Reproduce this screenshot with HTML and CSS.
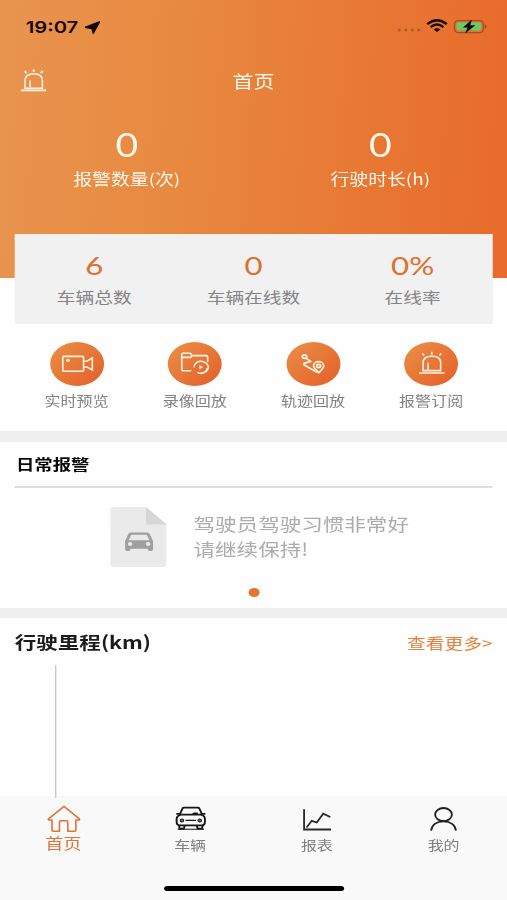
FILE: index.html
```html
<!DOCTYPE html>
<html lang="zh-CN">
<head>
<meta charset="utf-8">
<title>首页</title>
<link rel="stylesheet" href="styles.css">
</head>
<body>
<div class="screen">
  <header class="hero">
    <div class="status">
      <span class="time">19:07</span>
      <svg class="locate" viewBox="0 0 16 13" preserveAspectRatio="none"><path d="M15 .8 8.9 12.2 7.4 7.6 1 6.2z" fill="#100600" stroke="#100600" stroke-width="1.4" stroke-linejoin="round"/></svg>
      <svg class="signals" viewBox="0 0 92 16" preserveAspectRatio="none">
        <g fill="#a8602a"><circle cx="2.5" cy="12" r="1.6"/><circle cx="9" cy="12" r="1.6"/><circle cx="15.5" cy="12" r="1.6"/><circle cx="22" cy="12" r="1.6"/></g>
        <g fill="none" stroke="#140800" stroke-width="2.4"><path d="M30.5 6.1Q40.3-1.8 50.1 6.1"/><path d="M34 9.1Q40.3 4.1 46.6 9.1"/></g>
        <path d="M37 11.4Q40.3 9 43.6 11.4L40.3 14z" fill="#140800"/>
        <rect x="57.8" y="2.6" width="29" height="12" rx="3.8" fill="none" stroke="#9c531f" stroke-width="1.4"/>
        <rect x="60" y="4.6" width="24.5" height="8" rx="2" fill="#66cb68"/>
        <path d="M88.3 6.3q2.8 2.3 0 4.6z" fill="#8d4a1a"/>
        <path d="M74.8 2.2 66.8 9.3H71.2L69 14.8 78 7.6H73.2z" fill="#140800" stroke="#140800" stroke-width=".5"/>
      </svg>
    </div>
    <div class="navbar">
      <svg class="siren" viewBox="0 0 26 23" preserveAspectRatio="none"><g fill="none" stroke="#fff7e9" stroke-width="1.5"><path d="M4.2 19.2V11.5C4.2 7 7.8 4.7 13 4.7S21.8 7 21.8 11.5V19.2zM9.4 18V11.5"/><path d="M.3 21.4H25.7" stroke-width="1.7"/><path d="M13 .2V3M3.8 2.2 5.8 4M22.2 2.2 20.2 4" stroke-width="1.8"/></g></svg>
      <h1 class="title">首页</h1>
    </div>
    <div class="totals">
      <div class="total"><b class="total-num">0</b><span class="total-label">报警数量(次)</span></div>
      <div class="total"><b class="total-num">0</b><span class="total-label">行驶时长(h)</span></div>
    </div>
  </header>

  <section class="stats">
    <div class="stat"><b class="stat-num">6</b><span class="stat-label">车辆总数</span></div>
    <div class="stat"><b class="stat-num">0</b><span class="stat-label">车辆在线数</span></div>
    <div class="stat"><b class="stat-num">0%</b><span class="stat-label">在线率</span></div>
  </section>

  <nav class="shortcuts">
    <a class="shortcut">
      <svg class="disc" viewBox="0 0 54 44" preserveAspectRatio="none"><g fill="none" stroke="#fff3e4" stroke-width="1.6"><rect x="12.6" y="14.4" width="20.8" height="14.8" rx=".8"/><path d="M33.4 19.2H36.8L42.2 16V28L36.8 25H33.4"/></g><ellipse cx="17.8" cy="18.3" rx="1.9" ry="1.6" fill="#fff3e4"/></svg>
      <span>实时预览</span>
    </a>
    <a class="shortcut">
      <svg class="disc" viewBox="0 0 54 44" preserveAspectRatio="none"><g fill="none" stroke="#fff3e4" stroke-width="1.6"><path d="M23.5 28.8H15.6Q14 28.8 14 27.4V12.3Q14 11.3 15.2 11.3H22.6L24.3 13.6H38.6Q40 13.6 40 15V20M14 15.4H23L24.3 13.6"/><path d="M26.2 25.2A7.2 6 0 1 1 29.6 30.4M39.8 26Q38.6 31.2 32.6 31.2"/></g><path d="M31.6 23 35.4 25.3 31.6 27.6z" fill="#fff3e4"/></svg>
      <span>录像回放</span>
    </a>
    <a class="shortcut">
      <svg class="disc" viewBox="0 0 54 44" preserveAspectRatio="none"><g fill="none" stroke="#fff3e4" stroke-width="1.7" stroke-linejoin="round"><ellipse cx="18" cy="14.6" rx="2.2" ry="1.8"/><path d="M19.4 16.2 24.3 19.4 17.4 21.4V22.7L29.5 29.8 32.2 30.5"/><path d="M32.3 30.7C29.4 27.8 27 26 27 23.8A5.1 4.2 0 0 1 37.2 23.8C37.2 26.4 34.7 28.4 32.3 30.7z"/><ellipse cx="32.1" cy="24" rx="2" ry="1.6"/></g></svg>
      <span>轨迹回放</span>
    </a>
    <a class="shortcut">
      <svg class="disc" viewBox="0 0 54 44" preserveAspectRatio="none"><g fill="none" stroke="#fff3e4" stroke-width="1.6"><path d="M19 28.6V20.8C19 16.5 22.4 14.3 27.8 14.3S36.6 16.5 36.6 20.8V28.6zM24 27.4V20.8"/><path d="M15 31H40.6" stroke-width="1.7"/><path d="M27.7 9.8V12.7M18.2 11.5 20.2 13.5M37.3 11.5 35.3 13.5" stroke-width="1.6"/></g></svg>
      <span>报警订阅</span>
    </a>
  </nav>

  <section class="panel alarms">
    <h2 class="alarms-title">日常报警</h2>
    <div class="notice">
      <svg class="file" viewBox="0 0 56 60" preserveAspectRatio="none">
        <path d="M4.5 0H35.5L56 17.5V56.5Q56 60 51.5 60H4.5Q0 60 0 56.5V3.5Q0 0 4.5 0z" fill="#eaeaea"/>
        <path d="M35.5 0 56 17.5H35.5z" fill="#d7d7d7"/>
        <path fill-rule="evenodd" d="M20.3 25.4H36.7Q38.6 25.4 39.4 27.2L42.6 34V42.3Q42.6 44 40.6 44H39.3Q37.2 44 37.2 41.8H20.2Q20.2 44 18.2 44H17Q14.8 44 14.8 42.3V34L17.9 27.2Q18.7 25.4 20.3 25.4zM20.9 27.7 18.4 33.2H39L36.3 27.7zM19.7 35.1A2.2 1.9 0 1 0 19.8 35.1zM37.6 35.1A2.2 1.9 0 1 0 37.7 35.1z" fill="#9f9f9f"/>
      </svg>
      <p class="notice-text">驾驶员驾驶习惯非常好<br>请继续保持!</p>
    </div>
    <i class="pager"></i>
  </section>

  <section class="panel mileage">
    <div class="mileage-head"><h2 class="mileage-title">行驶里程(km)</h2><a class="more">查看更多&gt;</a></div>
    <div class="axis"></div>
  </section>

  <footer class="tabbar">
    <div class="tabs">
      <a class="tab active">
        <svg class="tab-icon" viewBox="0 0 34 28" preserveAspectRatio="none"><path d="M17.3 1.4 2 13.9Q1.4 15 2.7 15H5.4V25.3Q5.4 26.2 6.6 26.2H12.8V17.3Q12.8 15.8 14.3 15.8H19.6Q21.1 15.8 21.1 17.3V26.2H28Q29.1 26.2 29.1 25.3V15H31.9Q33.3 15 32.6 13.9z" fill="none" stroke="#dd7439" stroke-width="1.6" stroke-linejoin="round"/></svg>
        <span>首页</span>
      </a>
      <a class="tab">
        <svg class="tab-icon" viewBox="0 0 34 28" preserveAspectRatio="none"><g fill="none" stroke="#171717" stroke-width="1.9" stroke-linejoin="round"><path d="M7 9.6 9.8 3.4Q10.1 2.6 11.2 2.6H25Q26.1 2.6 26.4 3.4L29.2 9.6"/><path d="M8.4 9.6H27.8Q32 10.6 32 14.2V16.4Q32 20.4 28.6 20.4H7.2Q3.9 20.4 3.9 16.4V14.2Q3.9 10.6 8.4 9.6z"/><path d="M6.6 20.5V23.6H11.2L11.8 20.5M24 20.5 24.7 23.6H29.4V20.5M3.6 8.9H7M29 8.9H32.4"/><path d="M12.8 15.4H23.2" stroke-width="1.2"/><path d="M5 24.3H31" stroke-width="1"/></g><path d="M18 9.4 21 7.6H25V9.6z" fill="#171717"/><g fill="#666" stroke="#222"><ellipse cx="9.2" cy="15.4" rx="1.8" ry="1.5"/><ellipse cx="26.8" cy="15.4" rx="1.8" ry="1.5"/></g></svg>
        <span>车辆</span>
      </a>
      <a class="tab">
        <svg class="tab-icon" viewBox="0 0 34 28" preserveAspectRatio="none"><g fill="none" stroke="#292929" stroke-width="1.8"><path d="M4 4.2V24.5H30.7"/><path d="M6.5 22.5 11.6 15.8 16.6 17.5 23 8.6 30 12"/></g></svg>
        <span>报表</span>
      </a>
      <a class="tab">
        <svg class="tab-icon" viewBox="0 0 34 28" preserveAspectRatio="none"><g fill="none" stroke="#202020" stroke-width="1.8"><ellipse cx="17.2" cy="9.6" rx="8.3" ry="6.6"/><path d="M4.9 25.7C5.4 20 10.2 16.3 17.2 16.3S29 20 29.5 25.7"/></g></svg>
        <span>我的</span>
      </a>
    </div>
    <div class="home-bar"></div>
  </footer>
</div>
</body>
</html>
```

FILE: styles.css
```css
* { box-sizing: border-box; }

html { overflow: hidden; }

body {
  margin: 0;
  width: 507px;
  height: 900px;
  overflow: hidden;
  background: #fefefe;
}

/* A 414-unit wide layout, widened to fill the 507px window. */
.screen {
  display: flex;
  flex-direction: column;
  width: 414px;
  height: 900px;
  transform: scaleX(1.22464);
  transform-origin: 0 0;
  font-family: "Noto Sans CJK SC", sans-serif;
  color: #1c1c1c;
}

h1, h2, p { margin: 0; }
svg { display: block; flex: none; }
b { font-weight: 400; }

.hero {
  flex: none;
  height: 278px;
  background: linear-gradient(93deg, #e8944f 0%, #e8883f 38%, #e87b35 64%, #e86b2b 100%);
  color: #fff8ec;
}

.status {
  display: flex;
  align-items: center;
  height: 54px;
  padding: 0 15px 0 21px;
}
.time {
  font: 600 16.5px/20px Inter, sans-serif;
  color: #140800;
}
.locate { width: 13px; height: 13px; margin-left: 5px; }
.signals { width: 75px; height: 16px; margin-left: auto; margin-top: -2px; }

.navbar {
  display: grid;
  grid-template-columns: 1fr auto 1fr;
  align-items: center;
  height: 54px;
  padding: 0 17px;
}
.siren { width: 21px; height: 23px; margin-top: -2px; }
.title { font-size: 17.2px; line-height: 24px; font-weight: 400; }

.totals { display: grid; grid-template-columns: 1fr 1fr; padding-top: 19px; }
.total { display: flex; flex-direction: column; align-items: center; }
.total-num { font: 400 32px/36px Lato, sans-serif; }
.total-label { margin-top: 3px; font-size: 15.4px; line-height: 24px; }

.stats {
  position: relative;
  flex: none;
  display: grid;
  grid-template-columns: repeat(3, 1fr);
  height: 90px;
  margin: -44px 12px 0;
  padding-top: 16px;
  background: #f1f1f1;
}
.stat { display: flex; flex-direction: column; align-items: center; }
.stat-num { font: 400 25.5px/30px Lato, sans-serif; color: #df6f2e; }
.stat-label { margin-top: 4px; font-size: 15.3px; line-height: 24px; color: #848484; }

.shortcuts {
  flex: none;
  display: grid;
  grid-template-columns: repeat(4, 1fr);
  height: 107px;
  padding: 18px 13.7px 0 14.3px;
}
.shortcut {
  display: flex;
  flex-direction: column;
  align-items: center;
  gap: 5px;
  font-size: 13.1px;
  line-height: 20px;
  color: #828282;
}
.disc {
  width: 44px;
  height: 44px;
  border-radius: 50%;
  background: linear-gradient(135deg, #e98b43 10%, #e5632b 90%);
}

.panel { flex: none; border-top: 11px solid #efefef; }

.alarms { height: 177px; padding: 0 12px; }
.alarms-title {
  height: 46px;
  padding-left: 1px;
  border-bottom: 2px solid #dedede;
  font-size: 15px;
  line-height: 43px;
  color: #080808;
}
.notice { display: flex; padding: 19px 0 0 78px; }
.file { width: 46px; height: 60px; }
.notice-text {
  margin: 5px 0 0 22px;
  font-size: 17.6px;
  line-height: 24.5px;
  color: #acacac;
  white-space: nowrap;
}
.pager {
  display: block;
  width: 9px;
  height: 9px;
  margin: 21px auto 0;
  border-radius: 50%;
  background: #e4772c;
}

.mileage { height: 188px; border-top-width: 10px; padding: 0 12px; }
.mileage-head {
  display: flex;
  justify-content: space-between;
  align-items: center;
  height: 47px;
}
.mileage-title { font-size: 17.6px; line-height: 26px; }
.more { font-size: 15.3px; line-height: 24px; color: #e6813a; }
.axis {
  position: relative;
  z-index: 1;
  width: 1.3px;
  height: 133px;
  margin-left: 32.6px;
  background: #c4c4c4;
}

.tabbar {
  flex: 1;
  display: flex;
  flex-direction: column;
  align-items: center;
  background: #f9f9f9;
}
.tabs { display: grid; grid-template-columns: repeat(4, 1fr); width: 100%; height: 89.5px; }
.tab {
  display: flex;
  flex-direction: column;
  align-items: center;
  padding-top: 9px;
  font-size: 13px;
  line-height: 20px;
  color: #7f7f7f;
}
.tab-icon { width: 28px; height: 28px; margin-bottom: 2px; }
.active { font-size: 14.8px; color: #dd7439; }
.active .tab-icon { margin-bottom: 0; }
.home-bar { width: 147px; height: 5.5px; border-radius: 3px; background: #000; }
```
